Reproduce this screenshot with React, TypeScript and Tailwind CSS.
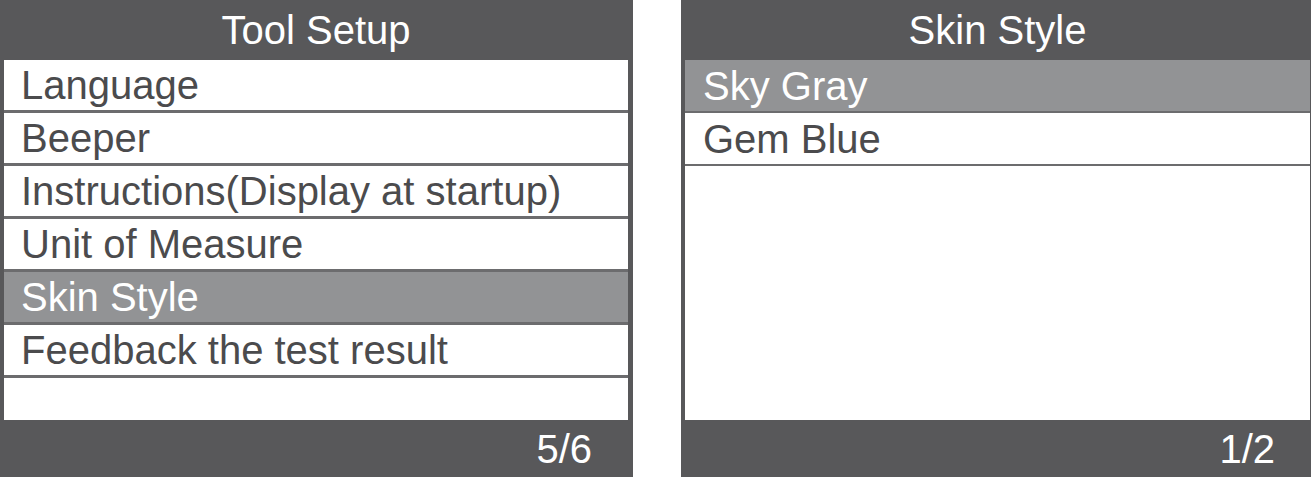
const font = { fontFamily: '"Liberation Sans", Arial, sans-serif' };

interface PanelProps {
  title: string;
  items: string[];
  selected: number;
  page: string;
  width: string;
  frame: string;
  rowCls: string;
  padCls: string;
  pageCls: string;
}

function Panel({ title, items, selected, page, width, frame, rowCls, padCls, pageCls }: PanelProps) {
  return (
    <div className={`flex h-[477px] flex-col bg-[#58585a] ${width} ${frame}`}>
      {/* Title bar */}
      <div className="flex h-[60px] shrink-0 items-center justify-center text-[40px] leading-none text-white">
        {title}
      </div>
      {/* Menu list */}
      <div className="flex flex-1 flex-col bg-white">
        {items.map((item, i) => (
          <div
            key={item}
            className={`flex shrink-0 items-center border-b-[#6c6c6e] text-[40px] leading-none ${rowCls} ${padCls} ${
              i === selected ? "bg-[#929395] text-white" : "text-[#4b4b4d]"
            }`}
          >
            {item}
          </div>
        ))}
      </div>
      {/* Page counter */}
      <div className={`flex h-[57px] shrink-0 items-center justify-end text-[40px] leading-none text-white ${pageCls}`}>
        {page}
      </div>
    </div>
  );
}

export default function App() {
  return (
    <div className="flex h-[481px] w-[1311px] items-start bg-white" style={font}>
      <Panel
        title="Tool Setup"
        items={[
          "Language",
          "Beeper",
          "Instructions(Display at startup)",
          "Unit of Measure",
          "Skin Style",
          "Feedback the test result",
        ]}
        selected={4}
        page="5/6"
        width="w-[633px]"
        frame="pl-[4px] pr-[5px]"
        rowCls="h-[53px] border-b-[3px]"
        padCls="pl-[17px]"
        pageCls="pr-[36px]"
      />
      <div className="w-[48px] shrink-0" />
      <Panel
        title="Skin Style"
        items={["Sky Gray", "Gem Blue"]}
        selected={0}
        page="1/2"
        width="w-[630px]"
        frame="pl-[4px] pr-[1px]"
        rowCls="h-[53px] border-b-[2px]"
        padCls="pl-[18px]"
        pageCls="pr-[35px]"
      />
    </div>
  );
}
